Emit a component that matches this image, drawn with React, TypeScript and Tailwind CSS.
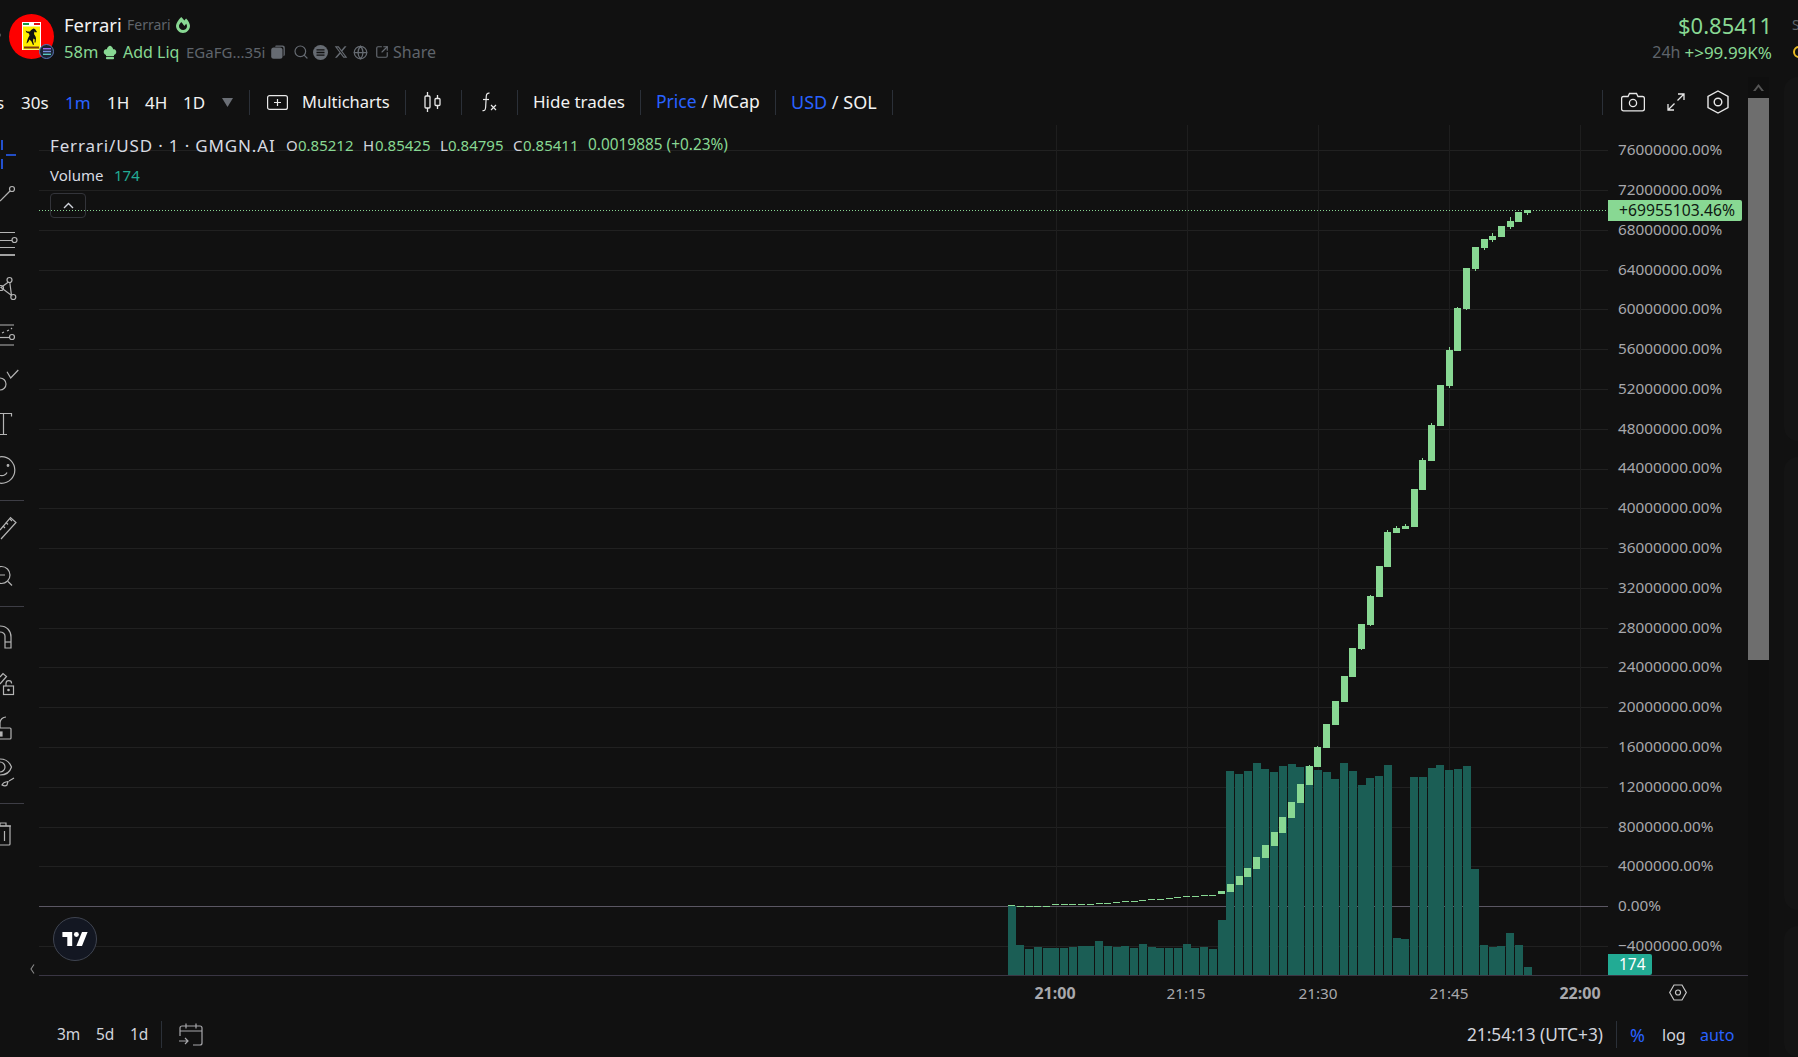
import React from "react";
import { FaFireAlt } from "react-icons/fa";
import { FaXTwitter } from "react-icons/fa6";
import { Search, Globe, SquareArrowOutUpRight } from "lucide-react";

const X0 = 1055.4 - 39;
const STEP = 8.747;
const Y0 = 125;
const vols: number[] = [498,615,627,621,624,624,624,621,618,618,603,618,621,618,624,612,621,624,624,624,612,624,621,627,540,93,102,93,69,87,96,78,72,81,78,90,96,117,69,93,135,114,108,75,594,597,111,111,84,75,90,87,78,387,615,621,618,579,615,681];
const dashes: number[] = [496,497,497,497,497,493,493,493,491,491,488,488,485,482,482,479,476,476,473,470,467,467,464,464];
const bodies: [number, number, number][] = [
  [19,891,894],[20,884,892],[21,876,885],[22,868,877],[23,857,869],[24,845,858],[25,832,846],[26,817,833],[27,802,818],[28,784,803],[29,766,785],
  [30,747,767],[31,724,748],[32,701,725],[33,676,702],[34,648,677],[35,624,649],[36,596,625],[37,566,597],[38,532,567],[39,528,533],[40,526,529],[41,489,527],[42,460,490],[43,425,461],[44,385,426],[45,350,386],[46,308,351],[47,268,309],[48,247,269],[49,239,248],[50,236,240],[51,226,237],[52,221,227],[53,212,222],[54,210,213],
];
const wicks: [number, number, number][] = [[29,765,767],[30,746,748],[35,648,650],[36,595,626],[38,530,533],[39,526,529],[40,524,527],[42,458,461],[43,423,426],[45,347,388],[46,307,309],[47,308,310],[48,268,271],[49,247,250],[50,233,242],[52,217,229],[54,212,215]];
const cx = (n: number) => X0 + STEP * n;
const hLines = Array.from({ length: 21 }, (_, i) => 946 - 39.79 * i);
const vLines = [0, 1, 2, 3, 4].map((i) => 1055.5 - 39 + 131.2 * i);
const prices = ["76000000.00%","72000000.00%","68000000.00%","64000000.00%","60000000.00%","56000000.00%","52000000.00%","48000000.00%","44000000.00%","40000000.00%","36000000.00%","32000000.00%","28000000.00%","24000000.00%","20000000.00%","16000000.00%","12000000.00%","8000000.00%","4000000.00%","0.00%","−4000000.00%"];

function Chart() {
  return (
    <svg width="1569" height="850" viewBox="0 0 1569 850" className="block">
      {hLines.filter((_, i) => i !== 1).map((y, i) => (
        <line key={i} x1="0" x2="1569" y1={Math.round(y - Y0) + 0.5} y2={Math.round(y - Y0) + 0.5} stroke="#212121" />
      ))}
      {vLines.map((x, i) => (
        <line key={i} x1={Math.round(x) + 0.5} x2={Math.round(x) + 0.5} y1="0" y2="850" stroke="#1e1e1e" />
      ))}
      <line x1="0" x2="1569" y1="781.5" y2="781.5" stroke="#5b5763" />
      <line x1="0" x2="1569" y1="85.5" y2="85.5" stroke="#88d893" strokeDasharray="1 2" />
      {vols.map((v, i) => {
        const top = 740 + v / 3;
        return <rect key={i} x={Math.round(cx(i - 5) - 4)} y={top - Y0} width="8" height={975 - top} fill="#1b5e55" />;
      })}
      {dashes.map((v, i) => (
        <rect key={i} x={Math.round(cx(i - 5) - 3.5)} y={Math.round(740 + v / 3 - Y0)} width="7" height="1" fill="#88d893" />
      ))}
      {wicks.map(([n, a, b], i) => (
        <rect key={i} x={Math.round(cx(n) - 0.5)} y={a - Y0} width="1" height={b - a} fill="#88d893" />
      ))}
      {bodies.map(([n, a, b], i) => (
        <rect key={i} x={Math.round(cx(n) - 3.5)} y={a - Y0} width="7" height={b - a} fill="#88d893" />
      ))}
    </svg>
  );
}

function Logo() {
  return (
    <div className="relative w-[45px] h-[45px] rounded-full bg-[#fe0000] shrink-0">
      <svg width="45" height="45" viewBox="0 0 45 45" className="block">
        <rect x="13" y="8" width="19" height="28" fill="#ffffff" />
        <rect x="14" y="9" width="6" height="2" fill="#1a9a45" />
        <rect x="20" y="9" width="5" height="2" fill="#ffffff" />
        <rect x="25" y="9" width="6" height="2" fill="#e01010" />
        <rect x="14" y="12.500" width="17" height="23" fill="#ffee00" />
        <path d="M24.500 14.500L26 15L28 18L26.800 18.500L25.500 17.500L25 20C26 21.500 27 23 27 24.500L26.500 28.500L25.500 28.500L25.800 25.500L24.500 24.500L24 27L25 30.500L24 31L22.500 27.500L20.500 25.500C20 27 19 28.500 17.500 29.500C18 27 18.800 24 20.500 21.500L20 19.500L17.500 18.500L16.500 16.500L18.500 17.500L21 17.500C21.500 16.500 22.500 15.500 24.500 14.500Z" fill="#111" />
        <rect x="15" y="32.500" width="15" height="2" fill="#7a3a10" />
      </svg>
      <div className="absolute left-[30px] top-[30px] w-[15px] h-[15px] rounded-full bg-[#1c2433] border border-[#5a78b8] flex items-center justify-center">
        <svg width="8" height="7" viewBox="0 0 8 7">
          <rect y="0" width="8" height="1.400" fill="#9a6cf0" />
          <rect y="2.800" width="8" height="1.400" fill="#7a8fe0" />
          <rect y="5.600" width="8" height="1.400" fill="#5ac8c0" />
        </svg>
      </div>
    </div>
  );
}

function Header() {
  return (
    <div className="h-[77px] flex relative shrink-0">
      <div className="absolute left-[-3px] top-[33px] w-[4px] h-[4px] rounded-full bg-[#555]" />
      <div className="ml-[9px] mt-[14px]"><Logo /></div>
      <div className="ml-[10px] flex flex-col">
        <div className="h-[24px] mt-[13px] flex items-center">
          <span className="text-[18.500px] leading-none text-[#f2f2f2] w-[57px] whitespace-nowrap">Ferrari</span>
          <span className="ml-[6px] text-[14px] leading-none text-[#5f646b] w-[43px] whitespace-nowrap">Ferrari</span>
          <FaFireAlt className="ml-[5px] text-[#88d893]" size={16} />
        </div>
        <div className="h-[24px] mt-[3px] flex items-center text-[16px] leading-none whitespace-nowrap">
          <span className="text-[#88d893] w-[33px] text-[16.500px]">58m</span>
          <svg className="ml-[6px]" width="14" height="15" viewBox="0 0 14 15" fill="#88d893">
            <path d="M3 10C1 9.300 0.200 7.300 1 5.700 1.700 4.200 3 4 3.800 4.200 4.300 2 6 0.800 7 0.800S9.700 2 10.200 4.200C11 4 12.300 4.200 13 5.700 13.800 7.300 13 9.300 11 10V11H3Z" />
            <rect x="3" y="11.800" width="8" height="2.400" rx="0.800" />
          </svg>
          <span className="ml-[6px] text-[#88d893] w-[54px]">Add Liq</span>
          <span className="ml-[9px] text-[#5f646b] text-[15px] w-[79px]">EGaFG...35i</span>
          <svg className="ml-[6px]" width="14" height="14" viewBox="0 0 14 14" fill="#666b72">
            <path d="M5 0.500H11.500C12.900 0.500 13.800 1.400 13.800 2.800V9.500C13.800 10.400 13.300 11 12.500 11.300V3.500C12.500 2.300 11.700 1.700 10.600 1.700H4.200C4.300 1 4.600 0.500 5 0.500Z" />
            <rect x="0.200" y="2.500" width="11.300" height="11.300" rx="2.500" />
          </svg>
          <Search className="ml-[8px] text-[#666b72]" size={16} strokeWidth={1.8} />
          <svg className="ml-[4px]" width="15" height="15" viewBox="0 0 15 15">
            <circle cx="7.500" cy="7.500" r="7.500" fill="#666b72" />
            <path d="M3.500 4.800h8M3.500 7.500h8M3.500 10.200h8" stroke="#111" strokeWidth="1.300" />
          </svg>
          <FaXTwitter className="ml-[6px] text-[#666b72]" size={14} />
          <Globe className="ml-[5px] text-[#666b72]" size={15} strokeWidth={2} />
          <SquareArrowOutUpRight className="ml-[7px] text-[#666b72]" size={14} strokeWidth={2} />
          <span className="ml-[4px] text-[#5f646b]">Share</span>
        </div>
      </div>
      <div className="ml-auto mr-[26px] flex flex-col items-end">
        <div className="h-[24px] mt-[13px] flex items-center text-[22px] leading-none text-[#88d893]">$0.85411</div>
        <div className="h-[24px] mt-[3px] flex items-center text-[17px] leading-none whitespace-nowrap">
          <span className="text-[#5f646b] text-[16px]">24h</span>
          <span className="ml-[4px] text-[#88d893]">+&gt;99.99K%</span>
        </div>
      </div>
      <div className="absolute left-[1792px] top-[16px] text-[14px] leading-[18px] text-[#5f646b]">S</div>
      <div className="absolute left-[1793px] top-[46px] w-[12px] h-[12px] rounded-full border-2 border-[#e8b923]" />
    </div>
  );
}

function Sep({ className }: { className: string }) {
  return <div className={"w-px bg-[#2b3038] " + className} />;
}

function Toolbar() {
  return (
    <div className="h-[48px] flex items-start shrink-0 text-[17px] leading-none text-[#f2f2f2] whitespace-nowrap">
      <div className="h-[50px] flex items-center">
        <span className="w-[21px] -indent-[4px]">s</span>
        <span className="w-[29px]">30s</span>
        <span className="ml-[15px] w-[26px] text-[#2962ff]">1m</span>
        <span className="ml-[16px] w-[22px]">1H</span>
        <span className="ml-[16px] w-[23px]">4H</span>
        <span className="ml-[15px] w-[23px]">1D</span>
        <svg className="ml-[16px]" width="11" height="9" viewBox="0 0 11 9"><path d="M0 0h11L5.500 9z" fill="#6b6f76" /></svg>
        <Sep className="ml-[16px] h-[25px]" />
        <svg className="ml-[17px]" width="21" height="15" viewBox="0 0 21 15" fill="none" stroke="#e8e8e8" strokeWidth="1.200">
          <rect x="0.600" y="0.600" width="19.800" height="13.800" rx="2" />
          <path d="M10.500 4v7M7 7.500h7" />
        </svg>
        <span className="ml-[14px] w-[88px] text-[16.500px]">Multicharts</span>
        <Sep className="ml-[15px] h-[25px]" />
        <svg className="ml-[18px]" width="18" height="22" viewBox="0 0 18 22" fill="none" stroke="#e8e8e8" strokeWidth="1.300">
          <rect x="1" y="5" width="5" height="12" rx="1" />
          <path d="M3.500 1v4M3.500 17v4" />
          <rect x="11" y="7.500" width="5" height="7" rx="1" />
          <path d="M13.500 4v3.500M13.500 14.500v3.500" />
        </svg>
        <Sep className="ml-[19px] h-[25px]" />
        <svg className="ml-[19px]" width="16" height="20" viewBox="0 0 16 20" fill="none" stroke="#e8e8e8" strokeWidth="1.200">
          <path d="M8.500 1.200C6.500 0.800 5.500 2 5.300 4L4.600 15.500C4.400 18 3.500 19 1.500 18.600" />
          <path d="M2 7.500h6" />
          <path d="M10 13l5 5M15 13l-5 5" />
        </svg>
        <Sep className="ml-[20px] h-[25px]" />
        <span className="ml-[15px] w-[92px] -translate-y-px">Hide trades</span>
        <Sep className="ml-[15px] h-[25px]" />
        <span className="ml-[15px] w-[104px] text-[17.500px]"><span className="text-[#2962ff]">Price</span> / MCap</span>
        <Sep className="ml-[15px] h-[25px]" />
        <span className="ml-[15px] w-[86px] text-[18px]"><span className="text-[#2962ff]">USD</span> / SOL</span>
        <Sep className="ml-[15px] h-[25px]" />
      </div>
      <div className="ml-auto h-[50px] flex items-center pr-[19px]">
        <Sep className="h-[25px]" />
        <svg className="ml-[18px]" width="24" height="20" viewBox="0 0 24 20" fill="none" stroke="#e8e8e8" strokeWidth="1.300">
          <path d="M2.500 4.500H7L8.500 1.500H15.500L17 4.500H21.500C22.600 4.500 23.400 5.300 23.400 6.400V17C23.400 18 22.600 18.800 21.500 18.800H2.500C1.400 18.800 0.600 18 0.600 17V6.400C0.600 5.300 1.400 4.500 2.500 4.500Z" />
          <circle cx="12" cy="11" r="3.600" />
        </svg>
        <svg className="ml-[22px]" width="18" height="18" viewBox="0 0 18 18" fill="none" stroke="#e8e8e8" strokeWidth="1.300">
          <path d="M10.500 7.500L17 1M11 1h6v6M7.500 10.500L1 17M7 17H1v-6" />
        </svg>
        <svg className="ml-[22px]" width="22" height="24" viewBox="0 0 22 24" fill="none" stroke="#e8e8e8" strokeWidth="1.400">
          <path d="M11 1L21 6.500V17.500L11 23L1 17.500V6.500Z" />
          <circle cx="11" cy="12" r="3.800" />
        </svg>
      </div>
    </div>
  );
}

const S = "#b4b4b4";
const tools: { y: number; h: number; c?: React.ReactNode; sep?: boolean }[] = [
  { y: 125, h: 53, c: <g fill="none" stroke="#2962ff" strokeWidth="1.600"><path d="M2 140v10M2 159v10M6 155h10" /></g> },
  { y: 178, h: 40, c: <g fill="none" stroke={S} strokeWidth="1.200"><path d="M0 201L10 191" /><circle cx="12" cy="189" r="2.500" /></g> },
  { y: 218, h: 47, c: <g fill="none" stroke={S} strokeWidth="1.200"><path d="M0 232.500h15M0 240.500h12M0 247.500h15" /><path d="M0 255h15" strokeWidth="1.800" /><circle cx="14.500" cy="240" r="2.500" /></g> },
  { y: 265, h: 40, c: <g fill="none" stroke={S} strokeWidth="1.200"><path d="M8.500 282L1 287.500 11.500 295.500 9.800 282.500" /><circle cx="9.500" cy="280" r="2.500" /><circle cx="13.300" cy="297" r="2.500" /><circle cx="1" cy="288" r="2.500" /></g> },
  { y: 305, h: 50, c: <g fill="none" stroke={S} strokeWidth="1.200"><path d="M0 325h14M0 345h14" /><path d="M0 337.500h9.500" /><path d="M2 333l2-1M7 331l2-1M11 329l1-1" /><circle cx="12" cy="337" r="2.500" /></g> },
  { y: 355, h: 43, c: <g fill="none" stroke={S} strokeWidth="1.200"><path d="M7 371.700L10.700 378 18.300 370" /><path d="M0 378A6 6 0 0 1 0 390" /></g> },
  { y: 398, h: 47, c: <g fill="none" stroke={S} strokeWidth="1.200"><path d="M0 413.500h11.500v3M3.500 413.500v21M0 434.500h7" /></g> },
  { y: 445, h: 55, c: <g fill="none" stroke={S} strokeWidth="1.200"><circle cx="1.500" cy="470" r="13.300" /><circle cx="8" cy="465.500" r="0.800" fill={S} /><path d="M0 475.500c3 .5 6-1 7-3" /></g> },
  { y: 500, h: 1, sep: true },
  { y: 501, h: 47, c: <g fill="none" stroke={S} strokeWidth="1.200"><path d="M0 530l10.500-12.500 5.500 5-15 16.500" /><path d="M3 526l2 2M6 522.500l2 2M10 519l2 2" /></g> },
  { y: 548, h: 58, c: <g fill="none" stroke={S} strokeWidth="1.200"><circle cx="1.500" cy="575" r="8.500" /><path d="M-2 575h7M8 581.500l4 4" /></g> },
  { y: 606, h: 1, sep: true },
  { y: 607, h: 50, c: <g fill="none" stroke={S} strokeWidth="1.200"><path d="M0 626C7 626 11 631 11 637V648H5V636C5 634 3 632 0 632" /><path d="M5 642h6" /></g> },
  { y: 657, h: 48, c: <g fill="none" stroke={S} strokeWidth="1.200"><path d="M0 677l3-3.500 3.500 3L0 684" /><rect x="3.500" y="686" width="10" height="8.500" /><path d="M6 686v-2.500a2.800 2.800 0 0 1 5.600 0" /><circle cx="8.500" cy="690" r="0.700" fill={S} /></g> },
  { y: 705, h: 48, c: <g fill="none" stroke={S} strokeWidth="1.200"><rect x="-5" y="728" width="16" height="11" rx="1" /><path d="M0 728v-5a6 6 0 0 1 6-6" /><rect x="0" y="732" width="2" height="4" fill={S} /></g> },
  { y: 753, h: 50, c: <g fill="none" stroke={S} strokeWidth="1.200"><path d="M0 759C6 759 10 763 11.500 767 10 772 6 775 0 775" /><circle cx="0" cy="767" r="5" /><path d="M2 785c1-3 4-3 6-3.500l-1 3.500c-1 1-3 1-5 0zM9 781l5-3" /></g> },
  { y: 803, h: 1, sep: true },
  { y: 804, h: 46, c: <g fill="none" stroke={S} strokeWidth="1.200"><path d="M-2 826h12v18a1 1 0 0 1-1 1H-2M0 826v-3h6v3M4.500 831v10" /><path d="M-2 826h13" /></g> },
];

function Tools() {
  return (
    <div className="w-[39px] shrink-0 flex flex-col h-[850px] overflow-hidden relative">
      {tools.map((t, i) =>
        t.sep ? (
          <div key={i} className="w-[24px] h-px shrink-0 bg-[#3d3d45]" />
        ) : (
          <svg key={i} width="30" height={t.h} viewBox={`0 ${t.y} 30 ${t.h}`} className="block shrink-0">{t.c}</svg>
        )
      )}
      <svg className="absolute left-[30px] bottom-[0px]" width="5" height="12" viewBox="0 0 5 12" fill="none" stroke="#8a8a8a" strokeWidth="1.100"><path d="M4 1.500L1 6l3 4.500" /></svg>
    </div>
  );
}

function Legend() {
  return (
    <div className="absolute left-[11px] top-[8px] whitespace-nowrap">
      <div className="flex items-center h-[24px] text-[15px] leading-none">
        <span className="text-[17px] text-[#d8dbe2] w-[236px] tracking-[0.850px]">Ferrari/USD · 1 · GMGN.AI</span>
        <span className="text-[#d1d4dc] w-[12px]">O</span><span className="text-[#88d893] w-[65px]">0.85212</span>
        <span className="text-[#d1d4dc] w-[12px]">H</span><span className="text-[#88d893] w-[65px]">0.85425</span>
        <span className="text-[#d1d4dc] w-[8px]">L</span><span className="text-[#88d893] w-[65px]">0.84795</span>
        <span className="text-[#d1d4dc] w-[10px]">C</span><span className="text-[#88d893] w-[65px]">0.85411</span>
        <span className="text-[#88d893] text-[15.400px]">0.0019885 (+0.23%)</span>
      </div>
      <div className="flex items-center h-[24px] mt-[6px] text-[15px] leading-none">
        <span className="text-[#d8dbe2] w-[64px]">Volume</span>
        <span className="text-[#22ab94]">174</span>
      </div>
      <div className="mt-[6px] w-[36px] h-[25px] rounded border border-[#33343a] flex items-center justify-center">
        <svg width="11" height="7" viewBox="0 0 11 7" fill="none" stroke="#d1d4dc" strokeWidth="1.400"><path d="M1 6l4.500-4.500L10 6" /></svg>
      </div>
    </div>
  );
}

function Axis() {
  return (
    <div className="w-[140px] shrink-0 relative text-[15.300px] leading-none text-[#a8a8ac] whitespace-nowrap pt-[5px]">
      {prices.map((p) => (
        <div key={p} className="h-[39.790px] flex items-center pl-[10px]">{p}</div>
      ))}
      <div className="absolute left-0 top-[75px] w-[134px] h-[21px] bg-[#88d893] rounded-r-[2px] text-[#0f1a12] text-[15.700px] flex items-center pl-[11px]">+69955103.46%</div>
      <div className="absolute left-0 bottom-0 w-[44px] h-[21px] bg-[#22ab94] rounded-r-[2px] text-white text-[15.500px] flex items-center pl-[11px]">174</div>
    </div>
  );
}

function TimeAxis() {
  const label = "absolute top-[9px] -translate-x-1/2 text-[15.300px] leading-[18px]";
  const bold = "absolute top-[9px] -translate-x-1/2 text-[16px] leading-[18px] font-bold";
  return (
    <div className="h-[35px] relative shrink-0 text-[#a8a8ac] whitespace-nowrap">
      <div className="absolute left-[39px] right-0 top-0 h-px bg-[#3a3644]" />
      <span className={bold + " left-[1055px]"}>21:00</span>
      <span className={label + " left-[1186px]"}>21:15</span>
      <span className={label + " left-[1318px]"}>21:30</span>
      <span className={label + " left-[1449px]"}>21:45</span>
      <span className={bold + " left-[1580px]"}>22:00</span>
      <svg className="absolute left-[1669px] top-[9px]" width="18" height="17" viewBox="0 0 18 17" fill="none" stroke="#c8c8c8" strokeWidth="1.200">
        <path d="M5 1h8l4.300 7.500L13 16H5L.7 8.500Z" />
        <circle cx="9" cy="8.500" r="2.500" />
      </svg>
    </div>
  );
}

function BottomBar() {
  return (
    <div className="flex-1 flex items-center whitespace-nowrap text-[15.500px] leading-none text-[#d1d4dc] pt-[2px]">
      <span className="ml-[57px] w-[23px]">3m</span>
      <span className="ml-[16px] w-[18px]">5d</span>
      <span className="ml-[16px] w-[18px]">1d</span>
      <Sep className="ml-[13px] h-[27px]" />
      <svg className="ml-[17px]" width="24" height="23" viewBox="0 0 24 23" fill="none" stroke="#a8a8ac" strokeWidth="1.200">
        <path d="M1 13V5a2 2 0 0 1 2-2h18a2 2 0 0 1 2 2v15a2 2 0 0 1-2 2h-7M1 8h22M7 .5v5M17 .5v5M0 18h9M6 15l3 3-3 3" />
      </svg>
      <span className="ml-auto text-[17.300px]">21:54:13 (UTC+3)</span>
      <Sep className="ml-[13px] h-[27px]" />
      <span className="ml-[13px] w-[16px] text-[#2962ff] text-[18px]">%</span>
      <span className="ml-[16px] w-[23px] text-[16px]">log</span>
      <span className="ml-[15px] w-[35px] mr-[13px] text-[#2962ff] text-[16px]">auto</span>
    </div>
  );
}

function Scrollbar() {
  return (
    <div className="w-[21px] shrink-0 flex flex-col bg-[#0f0f0f]">
      <div className="h-[21px] flex items-center justify-center">
        <svg width="11" height="7" viewBox="0 0 11 7"><path d="M0 7L5.500 0 11 7H8.500L5.500 3 2.500 7Z" fill="#555" /></svg>
      </div>
      <div className="h-[562px] bg-[#6e6e6e]" />
    </div>
  );
}

export default function App() {
  return (
    <div className="w-[1798px] h-[1057px] overflow-hidden bg-[#111111] flex flex-col font-['Noto_Sans',sans-serif]">
      <Header />
      <div className="flex-1 flex min-h-0">
        <div className="w-[1748px] shrink-0 flex flex-col">
          <Toolbar />
          <div className="h-[850px] flex shrink-0">
            <Tools />
            <div className="w-[1569px] shrink-0 relative">
              <Chart />
              <Legend />
              <div className="absolute left-[14px] top-[792px] w-[44px] h-[44px] rounded-full bg-[#131722] border border-[#3f4450] flex items-center justify-center">
                <svg width="26" height="14" viewBox="0 0 36 20" fill="#fff">
                  <path d="M14 20H7V7H0V0h14z" />
                  <path d="M28 20h-8L28 0h8z" />
                  <circle cx="20" cy="3.500" r="3.500" />
                </svg>
              </div>
            </div>
            <Axis />
          </div>
          <TimeAxis />
          <BottomBar />
        </div>
        <Scrollbar />
        <div className="ml-[15px] flex-1 flex flex-col gap-[16px]">
          <div className="h-[364px] shrink-0 rounded-l-[14px] bg-[#141414]" />
          <div className="h-[453px] shrink-0 rounded-l-[14px] bg-[#141414]" />
          <div className="flex-1 rounded-l-[14px] bg-[#141414]" />
        </div>
      </div>
    </div>
  );
}
